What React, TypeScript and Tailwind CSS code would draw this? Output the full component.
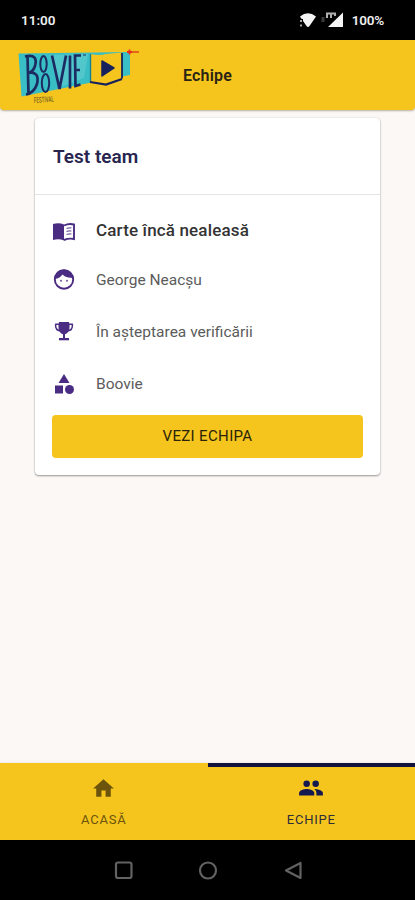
import React from "react";
import { MdCategory, MdHome } from "react-icons/md";

type IconProps = { size: number; className?: string };

const BookIcon = ({ size, className }: IconProps) => (
    <svg width={size} height={size} viewBox="0 0 24 24" className={className} fill="none">
        <path d="M1 5Q7 3.500 12 5.500V21.500Q7 19.500 1 21Z" fill="currentColor" />
        <path d="M12 6.500Q17 4 22 5.500V20Q17 19 12 21" stroke="currentColor" strokeWidth="1.900" />
        <path d="M14.500 9.500Q17 8.500 19.500 9M14.500 12.500Q17 11.500 19.500 12M14.500 15.500Q17 14.500 19.500 15" stroke="currentColor" strokeWidth="1.200" opacity=".75" />
    </svg>
);

const FaceIcon = ({ size, className }: IconProps) => (
    <svg width={size} height={size} viewBox="0 0 24 24" className={className} fill="none">
        <circle cx="12" cy="11.500" r="9.200" stroke="currentColor" strokeWidth="1.900" />
        <path d="M2.500 11C3 4.500 7 1.500 12 1.500C17 1.500 21 5.500 21.500 10C17 10 13 9.300 10.500 6.500C9 8.800 6.500 10.500 2.500 11Z" fill="currentColor" />
        <circle cx="9" cy="12.700" r="1" fill="currentColor" opacity=".8" />
        <circle cx="15" cy="12.700" r="1" fill="currentColor" opacity=".8" />
    </svg>
);

const TrophyIcon = ({ size, className }: IconProps) => (
    <svg width={size} height={size} viewBox="0 0 24 24" className={className} fill="none">
        <path d="M7 2H17L17.500 5C18 10 16 13.500 13 14.300V18.500H11V14.300C8 13.500 6 10 6.500 5Z" fill="currentColor" />
        <path d="M7 4.200H3.600C3.300 8 5 10.500 8.500 11M17 4.200H20.400C20.700 8 19 10.500 15.500 11" stroke="currentColor" strokeWidth="1.500" strokeLinejoin="round" />
        <path d="M7 18H17V20.300H7Z" fill="currentColor" />
    </svg>
);

const PeopleIcon = ({ size }: IconProps) => (
    <svg width={size} height={size} viewBox="0 0 24 24" fill="currentColor">
        <circle cx="8" cy="8" r="3" />
        <circle cx="16.300" cy="8" r="3" />
        <path d="M1 19V16.500C1 14.200 5.700 13 8 13S15 14.200 15 16.500V19Z" />
        <path d="M15 13C17.500 13 23 14.200 23 16.500V19H17V16.500C17 15 16 13.800 15 13Z" />
    </svg>
);

const teamRows = [
    { icon: FaceIcon, label: "George Neacșu" },
    { icon: TrophyIcon, label: "În așteptarea verificării" },
    { icon: MdCategory, label: "Boovie" },
];

// --- Status bar ---
const StatusBar = () => (
    <div className="flex h-10 shrink-0 items-center bg-black pl-[21px] pr-[31px] text-[13.500px] font-semibold text-[#eeeeee]">
        <span>11:00</span>
        <svg className="ml-auto mr-[7px]" width="46" height="16" viewBox="0 0 46 16" fill="none">
            <path d="M1 4.500Q9 -2 17 4.500L10.500 14Q9 16 7.500 14Z" fill="#f5f5f5" />
            <path d="M0 7h4v8H0z" fill="#000" />
            <path d="M2 8v2M2 12.500v2" stroke="#cfcfcf" strokeWidth="1.600" />
            <path d="M24 5v5" stroke="#3b3b3b" strokeWidth="3" />
            <path d="M44 0.500V15H29z" fill="#f5f5f5" />
            <path d="M27 1.500h10M28 1v5M32 1v5M36 1v3" stroke="#b0b0b0" strokeWidth="2" />
        </svg>
        <span className="tracking-[-0.2px]">100%</span>
    </div>
);

// --- Boovie logo ---
const Logo = () => (
    <svg width="126" height="60" viewBox="16 45 126 60" fill="none" role="img" aria-label="Boovie Festival">
        <path d="M18.500 53.500L130 52V75L104 80L21.500 96.500Z" fill="#38bec4" />
        <path d="M50 55L88 54L84 78L58 88Z" fill="#62cdd2" opacity=".6" />
        <path d="M90 54Q100 56 106 54L122 52.500V79L106 84.500L90 82Z" fill="#f5c51d" />
        <path d="M90.500 54V81.500" stroke="#177f90" strokeWidth="1.400" />
        <path d="M122 53V78.500" stroke="#17215c" strokeWidth="1.800" />
        <path d="M90 82L106 84.500L122 79" stroke="#17215c" strokeWidth="2.200" />
        <path d="M102 61L114 68L102 76Z" fill="#17215c" stroke="#17215c" strokeWidth="1.500" strokeLinejoin="round" />
        <g stroke="#1c2b62" strokeWidth="2.700">
            <path d="M27.500 56L28.500 94M25 56.500C35 54 37 59 35 66Q33 72 28 73C36 71 39 76 37 84Q34 93 26 94.500" />
            <ellipse cx="43.500" cy="64" rx="3.200" ry="8" strokeWidth="2" />
            <ellipse cx="45.500" cy="83" rx="3.700" ry="9" strokeWidth="2" />
            <path d="M52 55.500L59.500 89L66 55.500" />
            <path d="M70 55.500V88.500" />
            <path d="M81 55.500H75L75.500 86L80.500 84.500M75 70H80" />
        </g>
        <path d="M83 55h3" stroke="#1c2b62" strokeWidth="1" />
        <path d="M129.500 49.500v5M127 52h5" stroke="#e92b1b" strokeWidth="1.800" />
        <path d="M132 52h7" stroke="#e25a18" strokeWidth="1.800" />
        <text x="34" y="103" fill="#7b681d" fontFamily="Roboto, sans-serif" fontSize="8" fontWeight="500" textLength="20" lengthAdjust="spacingAndGlyphs" transform="rotate(-4 34 103)">FESTIVAL</text>
    </svg>
);

export default function App() {
    return (
        <div className="flex h-[900px] w-[415px] flex-col overflow-hidden bg-[#fcf8f5] font-[Roboto,sans-serif]">
            <StatusBar />

            <header className="flex h-[70px] shrink-0 items-center rounded-b-[4px] bg-[#f5c51d] pl-[16px] shadow-[0_1px_2px_rgba(80,65,20,0.4)]">
                <Logo />
                <h1 className="ml-[41px] pt-px text-[16px] font-semibold tracking-[0.2px] text-[#2a2414]">Echipe</h1>
            </header>

            <main className="flex-1 px-[35px] pt-2">
                <section className="h-[357px] rounded-[4px] bg-white shadow-[0_1px_2px_rgba(0,0,0,0.38),0_0_2px_rgba(0,0,0,0.12)]">
                    <h2 className="h-[77px] border-b border-[#e5e5e5] px-[18px] pt-[25px] text-[19px] leading-7 font-semibold text-[#28264f]">
                        Test team
                    </h2>
                    <div className="flex flex-col px-[17px] pt-[11px]">
                        <div className="flex h-[50px] items-center gap-[20px]">
                            <BookIcon size={24} className="text-[#4a2c83]" />
                            <span className="text-[17px] font-medium tracking-[0.15px] text-[#333333]">Carte încă nealeasă</span>
                        </div>
                        <div className="-mt-[2px] mb-[5px] flex flex-col">
                            {teamRows.map(({ icon: Icon, label }) => (
                                <div key={label} className="flex h-[52px] items-center gap-[20px]">
                                    <Icon size={24} className="text-[#4a2c83]" />
                                    <span className="pt-[2px] text-[15.500px] text-[#5b5b5b]">{label}</span>
                                </div>
                            ))}
                        </div>
                        <button className="h-[43px] rounded-[4px] bg-[#f5c51d] text-[15px] tracking-[0.35px] text-[#2b230a]">
                            VEZI ECHIPA
                        </button>
                    </div>
                </section>
            </main>

            <nav className="grid h-[77px] shrink-0 grid-cols-2 bg-[#f5c51d] text-[13px] tracking-[0.8px] shadow-[0_-1px_3px_rgba(0,0,0,0.06)]">
                <div className="flex flex-col items-center border-t-4 border-transparent pt-[9px] text-[#6c540d]">
                    <MdHome size={25} />
                    <span className="mt-[9px] leading-5">ACASĂ</span>
                </div>
                <div className="flex flex-col items-center border-t-4 border-[#11133d] pt-[8px] text-[#15194f]">
                    <PeopleIcon size={26} />
                    <span className="mt-[9px] leading-5 text-[#2f2c3c]">ECHIPE</span>
                </div>
            </nav>

            <div className="flex h-[60px] shrink-0 items-center justify-center bg-black">
                <svg width="190" height="20" viewBox="0 0 190 20" fill="none" stroke="#626262" strokeWidth="2.200">
                    <rect x="3" y="2.500" width="15.500" height="15.500" rx="2" />
                    <circle cx="95" cy="10.500" r="8" />
                    <path d="M187.500 3V18L173 10.500Z" strokeLinejoin="round" />
                </svg>
            </div>
        </div>
    );
}
